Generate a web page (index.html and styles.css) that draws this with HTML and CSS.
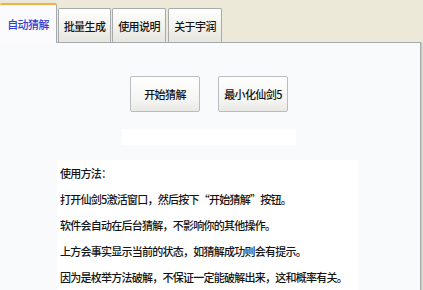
FILE: index.html
```html
<!DOCTYPE html>
<html lang="zh">
<head>
<meta charset="utf-8">
<link rel="stylesheet" href="styles.css">
</head>
<body>
<div class="window">
  <div class="tabs">
    <div class="tab active">自动猜解</div>
    <div class="tab">批量生成</div>
    <div class="tab">使用说明</div>
    <div class="tab">关于宇润</div>
  </div>
  <div class="panel">
    <div class="buttons">
      <button class="btn">开始猜解</button>
      <button class="btn">最小化仙剑5</button>
    </div>
    <div class="status"></div>
    <div class="help">
      <p>使用方法：</p>
      <p>打开仙剑5激活窗口，然后按下“开始猜解”按钮。</p>
      <p>软件会自动在后台猜解，不影响你的其他操作。</p>
      <p>上方会事实显示当前的状态，如猜解成功则会有提示。</p>
      <p>因为是枚举方法破解，不保证一定能破解出来，这和概率有关。</p>
    </div>
  </div>
</div>
</body>
</html>
```
FILE: styles.css
```css
html, body {
  margin: 0;
  padding: 0;
  width: 423px;
  height: 290px;
  overflow: hidden;
  background: #ECE9D8;
  font-family: "Noto Sans CJK SC", "Noto Sans", sans-serif;
  font-size: 11px;
  font-weight: 500;
  color: #141414;
}

.window {
  display: flex;
  flex-direction: column;
  height: 290px;
}

.tabs {
  display: flex;
  align-items: flex-end;
  height: 43px;
  position: relative;
  z-index: 2;
}

.tab {
  box-sizing: border-box;
  height: 34px;
  width: 53px;
  margin-left: 1px;
  margin-bottom: 1px;
  border: 1px solid #A5ABAD;
  border-bottom: none;
  border-radius: 2px 2px 0 0;
  background: linear-gradient(#FFFFFF, #F1F0EA 60%, #E6E5DE);
  display: flex;
  align-items: center;
  justify-content: center;
  letter-spacing: -0.6px;
  padding-top: 1px;
}

.tab:nth-child(3) { width: 54px; }
.tab:nth-child(4) { width: 54px; margin-left: 2px; }

.tab.active {
  width: 57px;
  height: 40px;
  margin-left: 0;
  margin-bottom: 0;
  border: none;
  border-top: 2px solid #F4B040;
  border-right: 1px solid #A5ABAD;
  background: #FBFBFD;
  color: #2F3FD0;
  padding-top: 0;
}

.panel {
  box-sizing: border-box;
  width: 421px;
  height: 248px;
  margin-top: -1px;
  border-top: 1px solid #A5ABAD;
  border-right: 1px solid #A5ABAD;
  box-shadow: 1px 0 0 #C9CCC2, 2px 0 0 #DCDCD0;
  background: #F9FAFC;
  display: flex;
  flex-direction: column;
  align-items: center;
}

.buttons {
  display: flex;
  gap: 18px;
  margin-top: 33px;
  margin-left: -2px;
}

.btn {
  box-sizing: border-box;
  width: 70px;
  height: 36px;
  border: 1px solid #B9BCC0;
  border-radius: 2px;
  background: linear-gradient(#FFFFFF, #F4F4F2 70%, #E7E7E3);
  font-family: inherit;
  font-size: 11px;
  font-weight: 500;
  letter-spacing: -0.6px;
  color: #141414;
  padding: 0;
}

.status {
  width: 174px;
  height: 25px;
  margin-top: 17px;
  margin-left: -3px;
  background: #FFFFFF;
}

.help {
  align-self: flex-start;
  box-sizing: border-box;
  width: 301px;
  margin-left: 57px;
  margin-top: 15px;
  padding-left: 3px;
  background: #FFFFFF;
  flex: 1;
}

.help p {
  margin: 0;
  line-height: 26px;
  letter-spacing: -0.75px;
  white-space: nowrap;
}
```
